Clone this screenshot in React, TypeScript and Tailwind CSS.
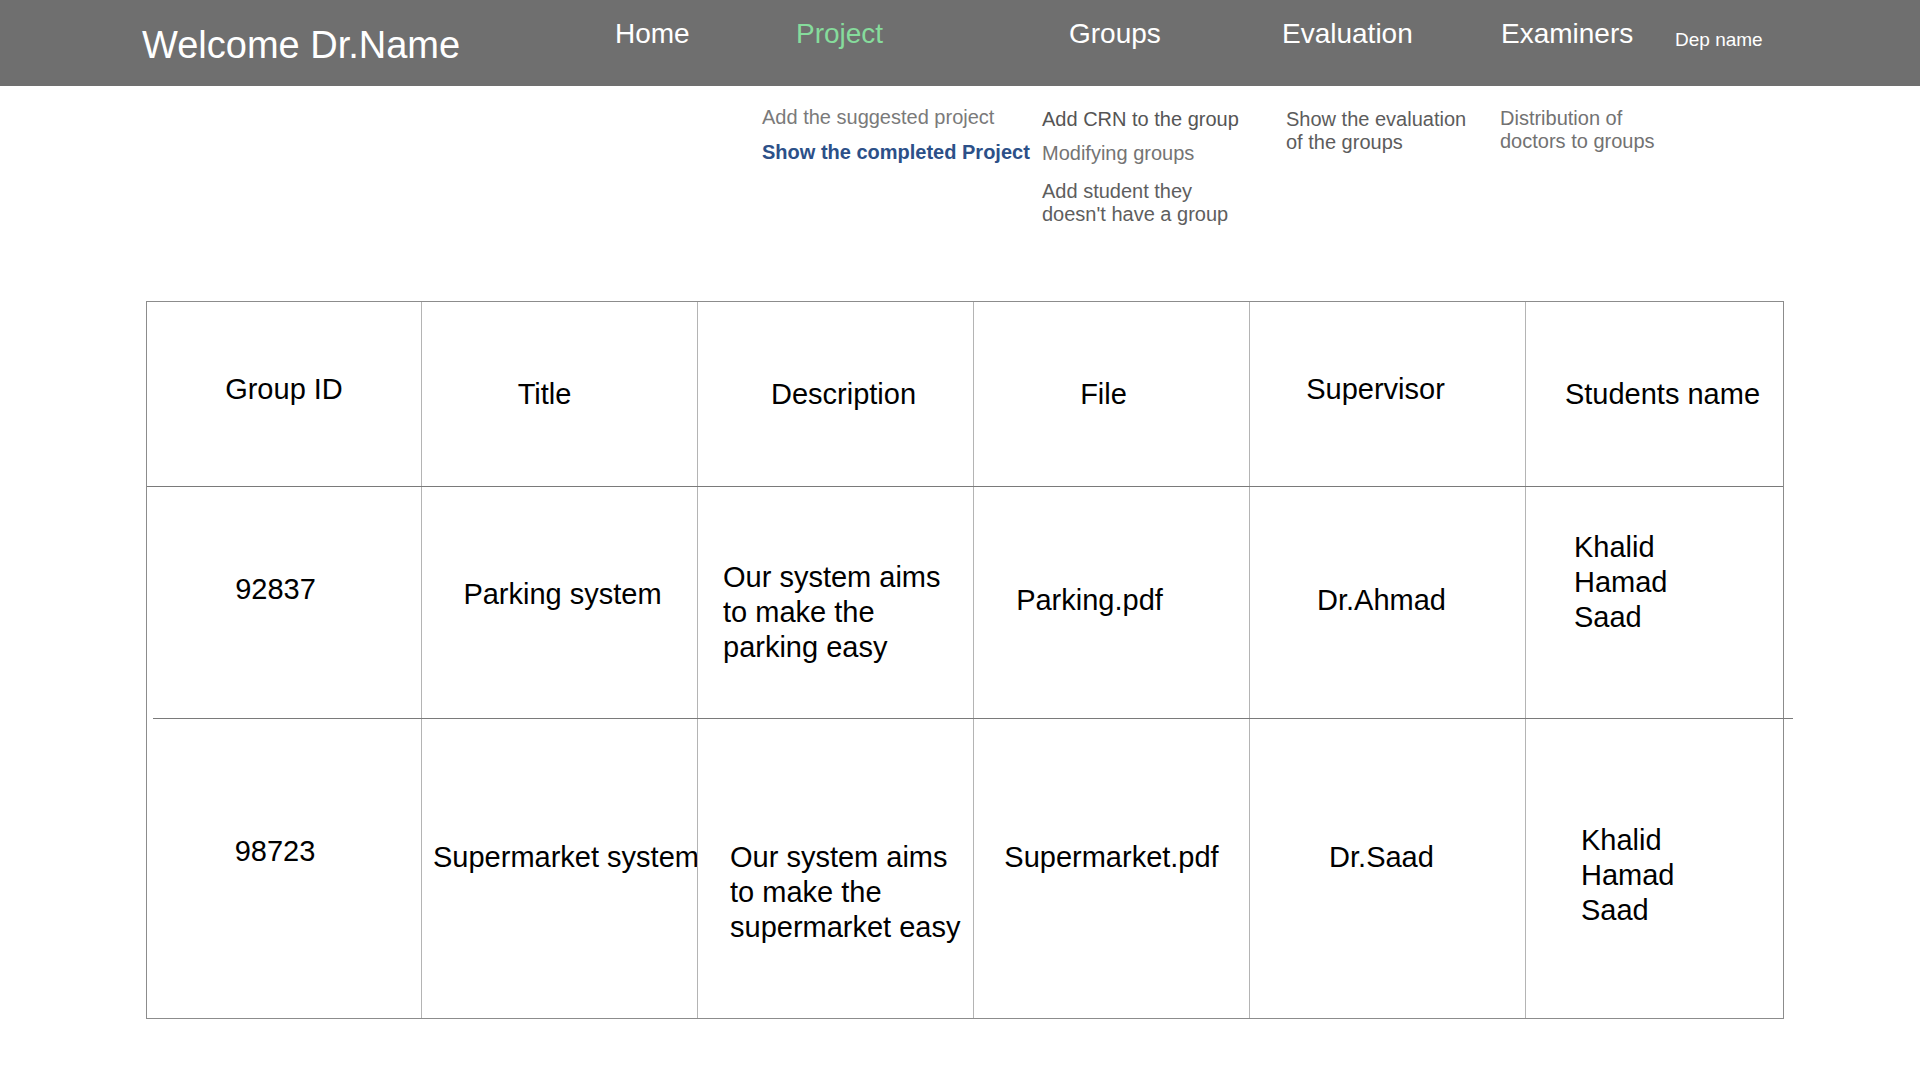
import React from 'react';

const navItems = [
  { label: 'Home', width: 'w-[181px]', active: false },
  { label: 'Project', width: 'w-[273px]', active: true },
  { label: 'Groups', width: 'w-[213px]', active: false },
  { label: 'Evaluation', width: 'w-[219px]', active: false },
  { label: 'Examiners', width: 'w-[174px]', active: false },
];

const colWidths = ['w-[274px]', 'w-[276px]', 'w-[276px]', 'w-[276px]', 'w-[276px]', 'flex-1'];

type Cell = { content: React.ReactNode; className: string };

const headerCells: Cell[] = [
  { content: 'Group ID', className: 'justify-center pb-[11px]' },
  { content: 'Title', className: 'justify-center pr-[30px]' },
  { content: 'Description', className: 'justify-center pl-[16px]' },
  { content: 'File', className: 'justify-center pr-[16px]' },
  { content: 'Supervisor', className: 'justify-center pr-[24px] pb-[11px]' },
  { content: 'Students name', className: 'justify-center pl-[16px]' },
];

const Lines = ({ lines }: { lines: string[] }) => (
  <div className="leading-[35px] whitespace-nowrap">
    {lines.map((l) => (
      <div key={l}>{l}</div>
    ))}
  </div>
);

const rows: Cell[][] = [
  [
    { content: '92837', className: 'justify-center pr-[17px] pb-[27px]' },
    { content: 'Parking system', className: 'justify-center pl-[6px] pb-[17px]' },
    {
      content: <Lines lines={['Our system aims', 'to make the', 'parking easy']} />,
      className: 'justify-start pl-[25px] pt-[19px]',
    },
    { content: 'Parking.pdf', className: 'justify-center pr-[44px] pb-[5px]' },
    { content: 'Dr.Ahmad', className: 'justify-center pr-[12px] pb-[5px]' },
    {
      content: <Lines lines={['Khalid', 'Hamad', 'Saad']} />,
      className: 'justify-start pl-[48px] pb-[41px]',
    },
  ],
  [
    { content: '98723', className: 'justify-center pr-[18px] pb-[35px]' },
    { content: 'Supermarket system', className: 'justify-start pl-[11px] pb-[23px]' },
    {
      content: <Lines lines={['Our system aims', 'to make the', 'supermarket easy']} />,
      className: 'justify-start pl-[32px] pt-[48px]',
    },
    { content: 'Supermarket.pdf', className: 'justify-center pb-[23px]' },
    { content: 'Dr.Saad', className: 'justify-center pr-[12px] pb-[23px]' },
    {
      content: <Lines lines={['Khalid', 'Hamad', 'Saad']} />,
      className: 'justify-start pl-[55px] pt-[13px]',
    },
  ],
];

const TableRow = ({ cells, height }: { cells: Cell[]; height: string }) => (
  <div className={`flex ${height}`}>
    {cells.map((c, i) => (
      <div
        key={i}
        className={`flex items-center whitespace-nowrap ${colWidths[i]} ${
          i > 0 ? 'border-l border-[#b4b4b4]' : ''
        } ${c.className}`}
      >
        {c.content}
      </div>
    ))}
  </div>
);

export default function App() {
  return (
    <div className="min-h-screen w-[1920px] bg-white font-['Liberation_Sans',Arial,sans-serif]">
      {/* top bar */}
      <header className="flex h-[86px] items-start bg-[#6f6f6f] pl-[142px] text-white">
        <div className="w-[473px] pt-[23px] text-[38px] leading-[44px]">Welcome Dr.Name</div>
        {navItems.map((n) => (
          <div
            key={n.label}
            className={`${n.width} pt-[17px] text-[28px] leading-[34px] ${
              n.active ? 'text-[#86dc9c]' : 'text-white'
            }`}
          >
            {n.label}
          </div>
        ))}
        <div className="pt-[28px] text-[19px] leading-[24px]">Dep name</div>
      </header>

      {/* sub menus */}
      <div className="flex h-[215px] pl-[762px] pt-[22px] text-[20px] leading-[23px]">
        <div className="flex w-[280px] flex-col gap-[12px]">
          <div className="-mt-[2px] text-[#7a7a7a]">Add the suggested project</div>
          <div className="font-bold text-[#2c5088]">Show the completed Project</div>
        </div>
        <div className="flex w-[244px] flex-col">
          <div className="text-[#555555]">Add CRN to the group</div>
          <div className="mt-[11px] text-[#747474]">Modifying groups</div>
          <div className="mt-[15px] text-[#5e5e5e]">
            Add student they
            <br />
            doesn&apos;t have a group
          </div>
        </div>
        <div className="w-[214px] text-[#5c5c5c]">
          Show the evaluation
          <br />
          of the groups
        </div>
        <div className="-mt-[1px] text-[#727272]">
          Distribution of
          <br />
          doctors to groups
        </div>
      </div>

      {/* table */}
      <div className="ml-[146px] flex w-[1638px] flex-col border border-[#8c8c8c] text-[29px] leading-[34px] text-black">
        <TableRow cells={headerCells} height="h-[184px]" />
        <div className="h-px bg-[#7a7a7a]" />
        <TableRow cells={rows[0]} height="h-[231px]" />
        <div className="-mr-[10px] ml-[6px] h-px bg-[#7a7a7a]" />
        <TableRow cells={rows[1]} height="h-[299px]" />
      </div>
    </div>
  );
}
